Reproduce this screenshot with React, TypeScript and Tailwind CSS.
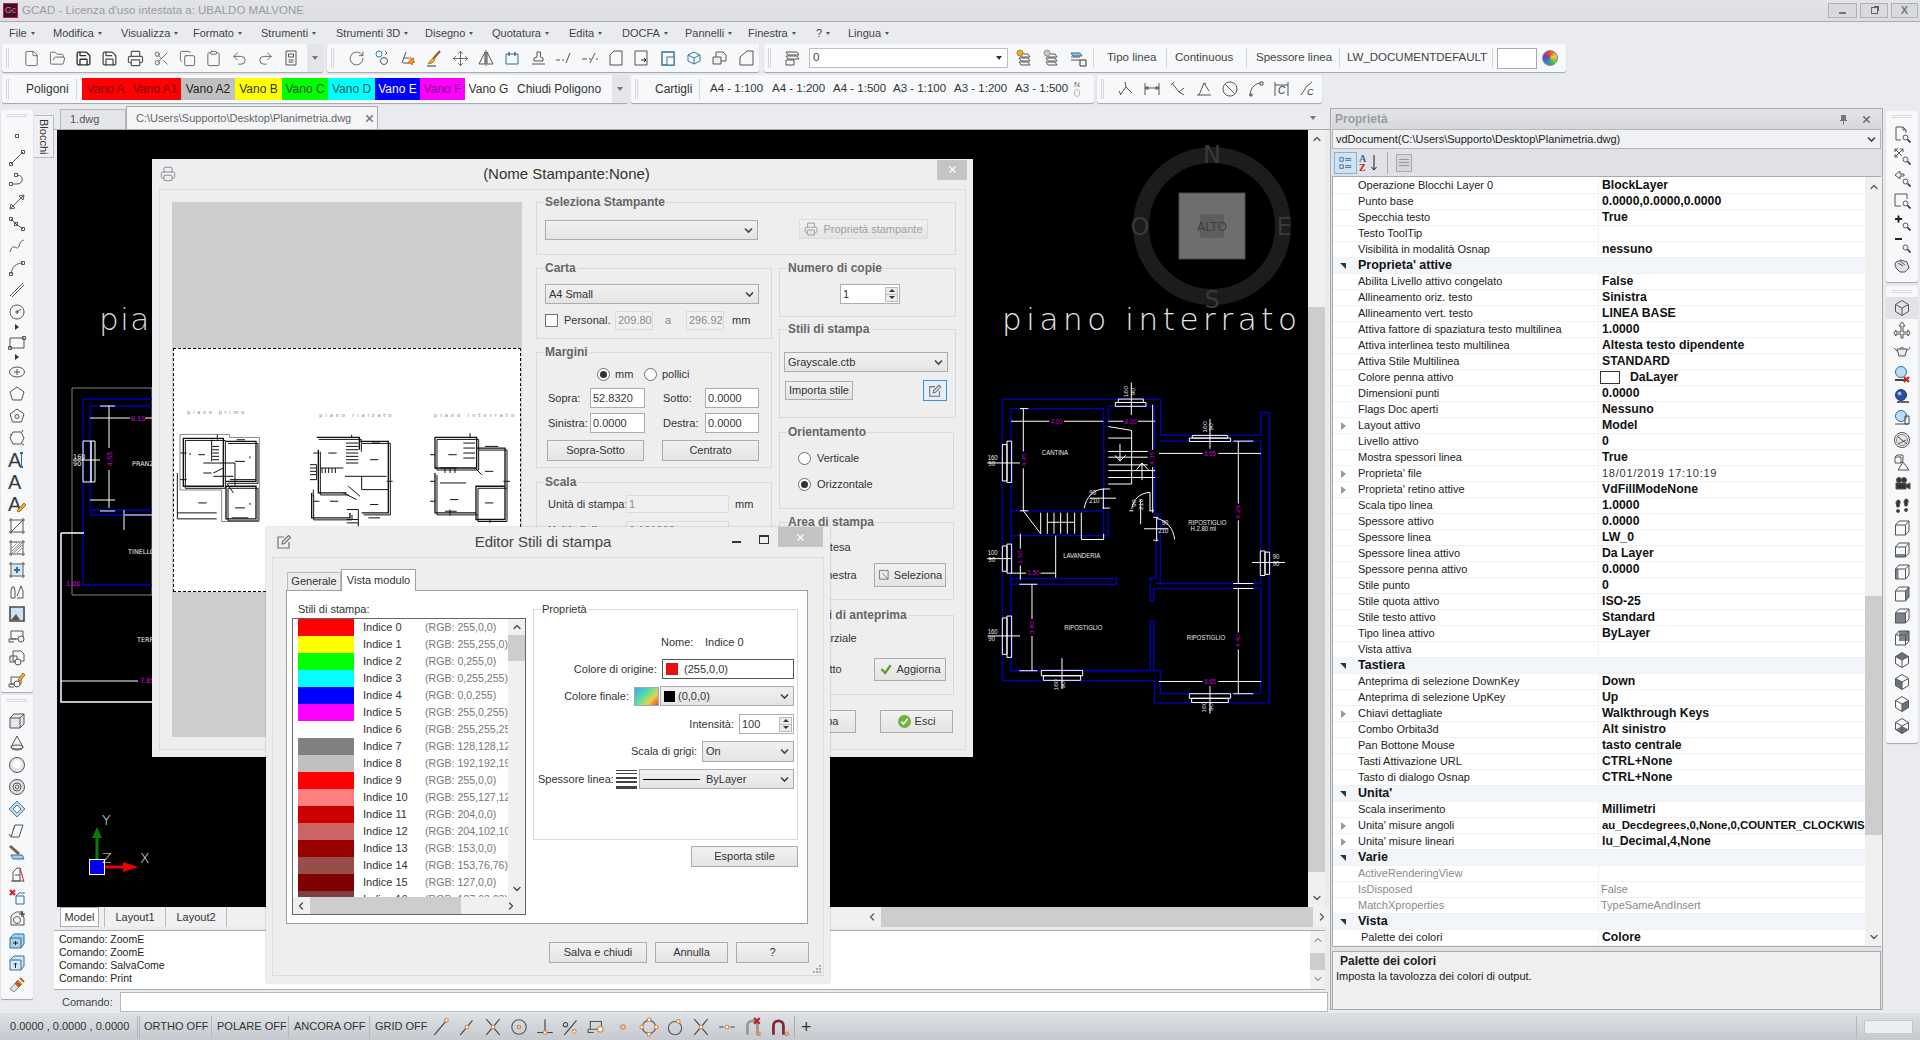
import type { ReactNode } from "react";
import { ChevronDown, ChevronLeft, ChevronRight, ChevronUp, Clipboard, Copy, File, FolderOpen, Move, Printer, Redo2, RotateCw, Save, Scissors, Undo2, X } from "lucide-react";

const sq = (x: number, y: number) => `M${x - 1.5} ${y - 1.5}h3v3h-3z`;
const r = (x: number, y: number, w: number, h: number) => `M${x} ${y}h${w}v${h}h${-w}z`;

function Svg({ children, s = 18 }: { children: ReactNode; s?: number }) {
  return (
    <svg width={s} height={s} viewBox="0 0 18 18" fill="none" stroke="#555" strokeWidth={1}>
      {children}
    </svg>
  );
}
const P = (d: string) => (
  <Svg>
    <path d={d} />
  </Svg>
);
const mag = (
  <>
    <circle cx="12.5" cy="12.5" r="2.5" />
    <path d="M14.5 14.5l3 3" strokeWidth={1.6} stroke="#333" />
  </>
);
const Zoom = (d: string) => (
  <Svg>
    <path d={d} />
    {mag}
  </Svg>
);
const cube = (face: string) => (
  <Svg>
    {face && <path d={face} fill="#7d838c" stroke="none" />}
    <path d="M2.5 6H12.5V16H2.5ZM2.5 6L6 2H16V12L12.5 16M12.5 6L16 2" />
  </Svg>
);
const iso = (face: string) => (
  <Svg>
    {face && <path d={face} fill="#6d7178" stroke="none" />}
    <path d="M9 1.5L15.5 5.5V12.5L9 16.5L2.5 12.5V5.5ZM9 9L2.5 5.5M9 9L15.5 5.5M9 9V16.5" />
  </Svg>
);
const Ab = ({ c }: { c?: ReactNode }) => (
  <span className="relative flex h-[20px] w-[22px] items-center pl-[2px] font-['Liberation_Sans',sans-serif] text-[20px] leading-none text-[#3a3a3a]">
    A{c}
  </span>
);

const lucide = { size: 17, strokeWidth: 1.2, color: "#555" };

const top1 = [
  <File {...lucide} />,
  <FolderOpen {...lucide} />,
  <Save {...lucide} strokeWidth={1.9} color="#333" />,
  <Save {...lucide} strokeWidth={1.7} color="#444" />,
  <Printer {...lucide} strokeWidth={1.6} />,
  <Scissors {...lucide} />,
  <Copy {...lucide} />,
  <Clipboard {...lucide} />,
  <Undo2 {...lucide} />,
  <Redo2 {...lucide} />,
  P("M4 2H14V16H4ZM6.5 5H11.5V8H6.5ZM6.5 11H11.5M6.5 13H11.5"),
];

const top2 = [
  <RotateCw {...lucide} />,
  <Svg>
    <circle cx="6" cy="5" r="3" stroke="#2f7fb8" />
    <circle cx="11" cy="12" r="3.5" stroke="#555" />
    <path d="M12 2l2 2-2 2" />
  </Svg>,
  <Svg>
    <path d="M3 14L7 3M5 9H10M4 14H9" />
    <path d="M11 8l1.5 2 2.5-1-1 2.5 2 1.5-2.5.5-.5 2.5-1.5-2-2.5.5 1-2.5" fill="#e8963a" stroke="#c9701c" />
  </Svg>,
  <Svg>
    <path d="M15 2L8 10" stroke="#8b5a2b" strokeWidth={2} />
    <path d="M8 9L5 12L3 15L7 14L10 11Z" fill="#f0b030" stroke="#b87a10" />
    <path d="M2 17H11" stroke="#333" />
  </Svg>,
  <Move {...lucide} />,
  P("M8 3L2 15H8ZM10 3L16 15H10ZM9 1V17"),
  <Svg>
    <path d="M3 5H15V15H3Z" stroke="#2d6f9f" />
    <path d="M6 3V7M12 3V7" stroke="#333" />
  </Svg>,
  P("M3 15H16M5 12H14V9L11.5 8V3H8V8L5 9Z"),
  P("M1 11H5M7 11H9M11 14L15 4"),
  P("M1 10H6M8 10H10M9 14L14 4M15 10H17"),
  P("M3 16V6L7 2H15V16Z"),
  <Svg>
    <path d="M2 2H14V16H2Z" />
    <path d="M8 11H13M11 9l2 2-2 2" stroke="#222" />
  </Svg>,
  <Svg>
    <path d="M3 3H15V16H3Z" stroke="#2d6f9f" strokeWidth={1.4} />
    <path d="M8 8H15V16H8Z" fill="#fff" stroke="#2d6f9f" />
  </Svg>,
  <Svg>
    <path d="M3 6L9 3L15 6V12L9 15L3 12ZM9 9V15M3 6L9 9L15 6" stroke="#2d7d9a" />
  </Svg>,
  <Svg>
    <path d="M5 3H12L15 6V12H5Z" />
    <path d="M2 8H10V15H2Z" fill="#eee" />
  </Svg>,
  P("M3 16V8L10 2H16V16Z"),
];

const layerIcons = [
  <Svg>
    <path d="M4 5H13L15 8H6ZM4 9H13L15 12H6ZM4 13H13L15 16H6Z" />
    <circle cx="5" cy="4" r="3" fill="#e5b030" stroke="#b8860b" />
  </Svg>,
  <Svg>
    <path d="M4 5H13L15 8H6ZM4 9H13L15 12H6ZM4 13H13L15 16H6Z" />
    <circle cx="5" cy="4" r="3" fill="#c8c8c8" stroke="#999" />
  </Svg>,
  <Svg>
    <path d="M2 4H11L13 7H4Z" stroke="#2d6f9f" fill="#9cc4e0" />
    <path d="M2 8H11M2 11H11" />
    <path d="M11 11H17V17H11Z" stroke="#333" />
  </Svg>,
];

const dims = [
  P("M3 15L9 7L15 13M9 7L8 2M2 11l2 4"),
  P("M2 3V15M16 3V15M2 8H16M2 8l3-1.5v3zM16 8l-3-1.5v3z"),
  P("M3 3L10 12L15 8M10 12l5 3M5 2l-3 3"),
  P("M2 15H16M4 15L9 3L14 11M9 3l2 1"),
  P("M9 2a7 7 0 1 0 .01 0zM4.5 4.5L13.5 13.5"),
  P("M3 16C3 9 7 4 13 3M3 16h2v-2h-2zM13 2h3v3h-3z"),
  <Svg>
    <path d="M2 2V16M15 2V16M2 5H15" />
    <text x="5" y="14" fontSize="10" fontStyle="italic" fill="#333" stroke="none">C</text>
  </Svg>,
  <Svg>
    <path d="M2 15L8 6L13 2" />
    <text x="8" y="15" fontSize="9" fontStyle="italic" fill="#333" stroke="none">C</text>
  </Svg>,
];

const Tri = () => (
  <div className="flex h-[8px] w-full items-center justify-center">
    <div className="h-0 w-0 border-y-[3px] border-l-[4px] border-y-transparent border-l-[#333]" />
  </div>
);

const left1: ReactNode[] = [
  P(sq(9, 9)),
  P(`M3 15L15 3${sq(3, 15)}${sq(15, 3)}`),
  P(`M4 13H9C16 13 16 4 9 4${sq(3, 13)}${sq(8, 4)}`),
  P("M3 15L15 3M2 16l1-5 4 4zM16 2l-5 1 4 4z"),
  P(`M3 4L8 9L15 14${sq(3, 4)}${sq(8, 9)}${sq(15, 14)}`),
  P("M2 15C5 4 9 15 11 9S14 4 16 3"),
  P(`M3 15C4 8 8 4 15 4${sq(3, 15)}${sq(15, 4)}`),
  P("M2 15L15 2M4 16L16 4"),
  P("M9 2a7 7 0 1 0 .01 0zM9 9L13 6M8 8h2v2h-2z"),
  "tri",
  P(`M2 5H16V15H2Z${sq(2, 15)}${sq(16, 5)}`),
  "tri",
  <Svg>
    <ellipse cx="9" cy="9" rx="7.5" ry="5" />
    <path d="M9 6V12M6 9H12" />
  </Svg>,
  P("M9 2L16 7L13.5 15H4.5L2 7Z"),
  <Svg>
    <path d="M9 2L16 7L13.5 15H4.5L2 7Z" />
    <circle cx="9" cy="9.5" r="2" />
  </Svg>,
  P("M5 3H13L16 9L13 15H5L2 9ZM4 6l-2-1M14 3l1-2M14 15l2 1"),
  <Ab c={<span className="absolute left-[14px] top-[2px] h-[16px] w-[3px] border-x-0 border-y-2 border-[#2d6f9f] bg-[linear-gradient(#2d6f9f,#2d6f9f)] bg-[length:1px_100%] bg-center bg-no-repeat" />} />,
  <Ab />,
  <Ab
    c={
      <svg className="absolute left-[9px] top-[7px]" width="12" height="12" viewBox="0 0 12 12">
        <path d="M2 10L9 2L11 4L4 11Z" fill="#f0b030" stroke="#a86e10" />
      </svg>
    }
  />,
  P("M3 1V17M15 1V17M1 3H17M1 15H17M3 15L15 3"),
  <Svg>
    <path d="M3 1V17M15 1V17M1 3H17M1 15H17" />
    <path d="M4 14L14 4M4 9L9 4M9 14L14 9M4 12L12 4M6 14L14 6" stroke="#999" />
  </Svg>,
  <Svg>
    <path d="M3 1V17M15 1V17M1 3H17M1 15H17" />
    <path d="M4 4H14V14H4Z" fill="#d6e6f3" stroke="none" />
    <path d="M9 6V12M6 9H12" stroke="#2d6f9f" strokeWidth={2} />
  </Svg>,
  P("M3 8V15H7V8L6 4H4ZM9 13L13 3L15 8V15H9"),
  <Svg>
    <path d="M2 2H16V16H2Z" strokeWidth={1.6} stroke="#444" />
    <path d="M3 3H15V15H3Z" fill="#cfe0ef" stroke="none" />
    <path d="M3 15L8 9L12 15Z" fill="#555" stroke="none" />
  </Svg>,
  <Svg>
    <path d="M3 4H15V12H3ZM1 12H8M1 12V15H6" />
    <circle cx="13" cy="12" r="3" fill="#f5f6f8" />
  </Svg>,
  <Svg>
    <path d="M5 2H13L16 5V12H5ZM2 7H9V13H2Z" />
    <circle cx="10" cy="13" r="3" fill="#f5f6f8" />
  </Svg>,
  <Svg>
    <path d="M3 6H13V13H3ZM1 13H7M1 13V16H6" />
    <circle cx="9" cy="13" r="3" fill="#f5f6f8" />
    <path d="M10 9L15 2L17 4L12 10Z" fill="#f0b030" stroke="#a86e10" />
  </Svg>,
];

const left2: ReactNode[] = [
  <Svg>
    <path d="M2 6H12V16H2ZM2 6L6 2H16V12L12 16M12 6L16 2" fill="#e6e8ec" />
  </Svg>,
  <Svg>
    <path d="M9 2L3 13C3 17 15 17 15 13Z" fill="#eef0f3" />
    <ellipse cx="9" cy="13" rx="6" ry="2" />
  </Svg>,
  <Svg>
    <circle cx="9" cy="9" r="7.5" fill="#e4e6ea" />
    <circle cx="9" cy="8" r="4" fill="#fff" stroke="none" />
  </Svg>,
  <Svg>
    <circle cx="9" cy="9" r="7.5" fill="#dfe1e5" />
    <circle cx="9" cy="9" r="4" fill="#fff" />
    <circle cx="9" cy="9" r="2" fill="#dfe1e5" />
  </Svg>,
  <Svg>
    <path d="M9 1L17 9L9 17L1 9Z" fill="#bcd6ee" stroke="#5b7f9c" />
    <path d="M9 5L13 9L9 13L5 9Z" fill="#fff" stroke="#5b7f9c" />
  </Svg>,
  P("M7 3H15L11 15H3ZM3 15L1 12M7 3L5 8"),
  <Svg>
    <path d="M2 2L11 10" stroke="#7d5f4e" strokeWidth={3} />
    <path d="M3 11H14L16 15H5Z" fill="#a9d1ee" stroke="#2d6f9f" />
  </Svg>,
  <Svg>
    <path d="M5 15V6L9 2H12V15Z" />
    <path d="M7 9H12M3 15H15" />
    <path d="M12 2L16 16" stroke="#d02020" />
  </Svg>,
  <Svg>
    <path d="M8 8H16V16H8ZM8 8L11 5H17" stroke="#2d6f9f" />
    <path d="M2 2L7 7M7 2L2 7" stroke="#d02020" strokeWidth={2} />
  </Svg>,
  <Svg>
    <path d="M3 15V6L8 2H14L16 8V15Z" />
    <circle cx="9" cy="10" r="3.5" />
    <path d="M14 1V7M11 4H17" stroke="#222" />
  </Svg>,
  <Svg>
    <path d="M2 6H13V16H2ZM2 6L6 2H16V12L13 16" fill="#a9d1ee" stroke="#2d6f9f" />
    <path d="M5 11H10M7.5 9V13" stroke="#222" />
  </Svg>,
  <Svg>
    <path d="M2 6H13V16H2ZM2 6L6 2H16V12L13 16" fill="#d8e9f6" stroke="#2d6f9f" />
    <path d="M7.5 14V9M6 10.5L7.5 9L9 10.5" stroke="#222" />
  </Svg>,
  <Svg>
    <path d="M2 13L10 4L14 8L6 16Z" fill="#dce4ea" stroke="#888" />
    <path d="M8 6L12 10" stroke="#c9581c" strokeWidth={4} />
    <path d="M12 2L16 6" stroke="#c9581c" strokeWidth={2} />
  </Svg>,
];

const right1 = [
  Zoom("M3 2H10L13 5V8M10 2V5H13M3 2V15H8"),
  Zoom("M2 2L9 9M2 2h3M2 2v3M10 2L2 10M10 2h-3M10 2v3M2 10h3M2 10v-3"),
  Zoom("M7 2L2 6L7 10V7H11V5H7Z"),
  Zoom("M2 3H14V8M2 3V15H8"),
  <Svg>
    <path d="M2 6H9M5.5 2.5V9.5" stroke="#222" strokeWidth={2} />
    {mag}
  </Svg>,
  <Svg>
    <path d="M2 4H9" stroke="#222" strokeWidth={2} />
    {mag}
  </Svg>,
  <Svg>
    <path d="M3 5L8 3L14 5L16 11L12 15H7L3 11L2 7Z" fill="#dfe1e5" />
    <path d="M5 6L10 9M7 4L12 8" />
  </Svg>,
];

const right2 = [
  iso(""),
  P("M9 1L6 5H8V11H3V9L1 12L3 15V13H8V17H10V13H15V15L17 12L15 9V11H10V5H12Z"),
  <Svg>
    <path d="M4 6H14L12 13H6ZM7 6C7 4 11 4 11 6M14 7C17 6 17 5 16 4M4 8L1 5" fill="#e6e8ec" />
  </Svg>,
  <Svg>
    <circle cx="8" cy="7" r="5.5" fill="#bcdcf2" stroke="#2d6f9f" />
    <path d="M2 15H12" stroke="#444" strokeWidth={2} />
    <path d="M11 12L16 17M16 12L11 17" stroke="#d02020" strokeWidth={2} />
  </Svg>,
  <Svg>
    <circle cx="8" cy="8" r="5.5" fill="#2a4f9c" stroke="#1e3a78" />
    <circle cx="6.5" cy="6.5" r="2" fill="#9cb8e8" stroke="none" />
    <path d="M4 15H16" stroke="#666" strokeWidth={2} />
  </Svg>,
  <Svg>
    <circle cx="8" cy="7" r="5.5" fill="#bcdcf2" stroke="#2d6f9f" />
    <path d="M2 15H15M12 7H16V15H12Z" stroke="#444" />
  </Svg>,
  <Svg>
    <circle cx="9" cy="9" r="7.5" />
    <circle cx="9" cy="9" r="5.5" fill="#e4e6ea" stroke="#888" />
    <path d="M4 5L14 13M5 13L13 9" />
  </Svg>,
  <Svg>
    <path d="M2 4H8V10H2ZM2 4L4 2H10V8L8 10M10 9L5 17H16Z" />
  </Svg>,
  <Svg>
    <circle cx="6" cy="5" r="2.5" fill="#333" />
    <circle cx="11" cy="5" r="2.5" fill="#333" />
    <path d="M3 8H13V14H3ZM13 10L17 8V14L13 12" fill="#333" />
  </Svg>,
  <Svg>
    <path d="M3 6C3 2 8 2 7 6L6 10H4ZM11 5C11 1 16 1 15 5L14 9H12Z" fill="#333" />
    <circle cx="5" cy="14" r="1.5" fill="#333" />
    <circle cx="13" cy="13" r="1.5" fill="#333" />
  </Svg>,
  cube(""),
  cube("M2.5 13H12.5V16H2.5Z"),
  cube("M2.5 6H5.5V16H2.5Z"),
  cube("M12.5 6L16 2V12L12.5 16Z"),
  cube("M2.5 6H12.5V16H2.5Z"),
  cube("M6 2H16V12H6Z"),
  iso("M2.5 5.5L9 1.5L15.5 5.5L9 9Z"),
  iso("M2.5 12.5V5.5L9 9V16.5Z"),
  iso("M15.5 12.5V5.5L9 9V16.5Z"),
  iso("M2.5 12.5L9 16.5L15.5 12.5L9 9Z"),
];

const dotc = "#d8843a";
const snap = (d: string, pts: number[][]) => (
  <Svg s={20}>
    <path d={d} stroke="#444" />
    {pts.map((p, i) => (
      <circle key={i} cx={p[0]} cy={p[1]} r="1.6" stroke={dotc} fill="#fff" />
    ))}
  </Svg>
);
const snaps = [
  snap("M3 16L14 3", [[14, 3]]),
  snap("M3 16L14 3", [[9, 9]]),
  snap("M3 2L15 16M15 2L3 16", [[9, 9]]),
  <Svg s={20}>
    <circle cx="9" cy="9" r="6.5" />
    <circle cx="9" cy="9" r="1.6" stroke={dotc} />
  </Svg>,
  snap("M9 2V14M2 14H16", [[9, 14]]),
  snap("M3 16L14 3M4 5a2 2 0 1 0 .01 0", [[12, 13]]),
  <Svg s={20}>
    <path d="M3 4H13V11H3ZM1 11H8M1 11V14H6" />
    <circle cx="12" cy="11" r="2.5" stroke={dotc} fill="#fff" />
  </Svg>,
  <Svg s={20}>
    <circle cx="9" cy="9" r="2" stroke={dotc} />
  </Svg>,
  <Svg s={20}>
    <circle cx="9" cy="9" r="6" />
    <path d="M9 3V15M3 9H15" stroke="#ddd" />
    {[[9, 2.5], [9, 15.5], [2.5, 9], [15.5, 9]].map((p, i) => (
      <circle key={i} cx={p[0]} cy={p[1]} r="1.6" stroke={dotc} fill="#fff" />
    ))}
  </Svg>,
  <Svg s={20}>
    <circle cx="9" cy="10" r="6" />
    <circle cx="12" cy="4" r="1.6" stroke={dotc} fill="#fff" />
  </Svg>,
  snap("M3 2L15 16M15 2L3 16", [[9, 9]]),
  snap("M2 9H6M12 9H16", [[9, 9]]),
  <Svg s={20}>
    <path d="M4 16V8C4 2 13 2 13 8V16" stroke="#999" strokeWidth={2.5} />
    <path d="M10 1L15 6M15 1L10 6" stroke="#c02020" strokeWidth={2} />
    <circle cx="14" cy="15" r="1.5" stroke={dotc} />
  </Svg>,
  <Svg s={20}>
    <path d="M4 16V8C4 2 13 2 13 8V16" stroke="#7a2c36" strokeWidth={2.5} />
    <circle cx="16" cy="15" r="1.5" stroke={dotc} />
  </Svg>,
];

function Grip() {
  return <div className="mx-[4px] h-[20px] w-[3px] shrink-0 border-x border-[#d5d7db]" />;
}
function Sep({ cls = "" }: { cls?: string }) {
  return <div className={`h-[20px] w-px shrink-0 bg-[#d5d7db] ${cls}`} />;
}
const panel = "flex items-center rounded-[2px] bg-[#f7f8fa] shadow-[0_1px_1px_rgba(0,0,0,0.3)]";

function DropEnd() {
  return (
    <div className="ml-auto flex h-full w-[16px] items-center justify-center rounded-r-[2px] bg-[#e3e5e9]">
      <div className="h-0 w-0 border-x-[3px] border-t-[4px] border-x-transparent border-t-[#777]" />
    </div>
  );
}

const menus = [
  ["File", "w-[44px]"],
  ["Modifica", "w-[68px]"],
  ["Visualizza", "w-[72px]"],
  ["Formato", "w-[68px]"],
  ["Strumenti", "w-[75px]"],
  ["Strumenti 3D", "w-[89px]"],
  ["Disegno", "w-[67px]"],
  ["Quotatura", "w-[77px]"],
  ["Edita", "w-[53px]"],
  ["DOCFA", "w-[63px]"],
  ["Pannelli", "w-[63px]"],
  ["Finestra", "w-[68px]"],
  ["?", "w-[32px]"],
  ["Lingua", "w-[60px]"],
];

const vani = [
  ["Vano A", "w-[47px] bg-[#ff0000] text-[#7a1010]"],
  ["Vano A1", "w-[52px] bg-[#ff0000] text-[#7a1010]"],
  ["Vano A2", "w-[54px] bg-[#c0c0c0] text-[#222]"],
  ["Vano B", "w-[47px] bg-[#ffff00] text-[#333]"],
  ["Vano C", "w-[46px] bg-[#00ff00] text-[#225522]"],
  ["Vano D", "w-[47px] bg-[#00ffff] text-[#225555]"],
  ["Vano E", "w-[45px] bg-[#0000ff] text-white"],
  ["Vano F", "w-[45px] bg-[#ff00ff] text-[#7a107a]"],
  ["Vano G", "w-[47px] bg-white text-[#333]"],
];

const cartigli = [
  ["A4 - 1:100", "w-[62px]"],
  ["A4 - 1:200", "w-[61px]"],
  ["A4 - 1:500", "w-[60px]"],
  ["A3 - 1:100", "w-[61px]"],
  ["A3 - 1:200", "w-[61px]"],
  ["A3 - 1:500", "w-[58px]"],
];

type Row = { n: string; v?: string; cat?: boolean; exp?: boolean; thin?: boolean; dis?: boolean; box?: boolean; long?: boolean };
const rows: Row[] = [
  { n: "Operazione Blocchi Layer 0", v: "BlockLayer" },
  { n: "Punto base", v: "0.0000,0.0000,0.0000" },
  { n: "Specchia testo", v: "True" },
  { n: "Testo ToolTip" },
  { n: "Visibilità in modalità Osnap", v: "nessuno" },
  { n: "Proprieta' attive", cat: true },
  { n: "Abilita Livello attivo congelato", v: "False" },
  { n: "Allineamento oriz. testo", v: "Sinistra" },
  { n: "Allineamento vert. testo", v: "LINEA BASE" },
  { n: "Attiva fattore di spaziatura testo multilinea", v: "1.0000" },
  { n: "Attiva interlinea testo multilinea", v: "Altesta testo dipendente" },
  { n: "Attiva Stile Multilinea", v: "STANDARD" },
  { n: "Colore penna attivo", v: "DaLayer", box: true },
  { n: "Dimensioni punti", v: "0.0000" },
  { n: "Flags Doc aperti", v: "Nessuno" },
  { n: "Layout attivo", v: "Model", exp: true },
  { n: "Livello attivo", v: "0" },
  { n: "Mostra spessori linea", v: "True" },
  { n: "Proprieta' file", v: "18/01/2019 17:10:19", exp: true, thin: true },
  { n: "Proprieta' retino attive", v: "VdFillModeNone", exp: true },
  { n: "Scala tipo linea", v: "1.0000" },
  { n: "Spessore attivo", v: "0.0000" },
  { n: "Spessore linea", v: "LW_0" },
  { n: "Spessore linea attivo", v: "Da Layer" },
  { n: "Spessore penna attivo", v: "0.0000" },
  { n: "Stile punto", v: "0" },
  { n: "Stile quota attivo", v: "ISO-25" },
  { n: "Stile testo attivo", v: "Standard" },
  { n: "Tipo linea attivo", v: "ByLayer" },
  { n: "Vista attiva" },
  { n: "Tastiera", cat: true },
  { n: "Anteprima di selezione DownKey", v: "Down" },
  { n: "Anteprima di selezione UpKey", v: "Up" },
  { n: "Chiavi dettagliate", v: "Walkthrough Keys", exp: true },
  { n: "Combo Orbita3d", v: "Alt sinistro" },
  { n: "Pan Bottone Mouse", v: "tasto centrale" },
  { n: "Tasti Attivazione URL", v: "CTRL+None" },
  { n: "Tasto di dialogo Osnap", v: "CTRL+None" },
  { n: "Unita'", cat: true },
  { n: "Scala inserimento", v: "Millimetri" },
  { n: "Unita' misure angoli", v: "au_Decdegrees,0,None,0,COUNTER_CLOCKWISE", exp: true, long: true },
  { n: "Unita' misure lineari", v: "lu_Decimal,4,None", exp: true },
  { n: "Varie", cat: true },
  { n: "ActiveRenderingView", dis: true },
  { n: "IsDisposed", v: "False", dis: true },
  { n: "MatchXproperties", v: "TypeSameAndInsert", dis: true },
  { n: "Vista", cat: true },
  { n: "Palette dei colori", v: "Colore" },
];

const stili = [
  ["#ff0000", "255,0,0"],
  ["#ffff00", "255,255,0"],
  ["#00ff00", "0,255,0"],
  ["#00ffff", "0,255,255"],
  ["#0000ff", "0,0,255"],
  ["#ff00ff", "255,0,255"],
  ["#ffffff", "255,255,255"],
  ["#808080", "128,128,128"],
  ["#c0c0c0", "192,192,192"],
  ["#ff0000", "255,0,0"],
  ["#ff7f7f", "255,127,127"],
  ["#cc0000", "204,0,0"],
  ["#cc6666", "204,102,102"],
  ["#990000", "153,0,0"],
  ["#994c4c", "153,76,76"],
  ["#7f0000", "127,0,0"],
  ["#7f3f3f", "127,63,63"],
];

function V() {
  return (
    <svg className="ml-auto mr-[4px] shrink-0" width="9" height="7" viewBox="0 0 9 7" fill="none" stroke="#444" strokeWidth={1.6}>
      <path d="M1 1.5L4.5 5L8 1.5" />
    </svg>
  );
}
function Sel({ cls, children }: { cls: string; children?: ReactNode }) {
  return (
    <div className={`flex shrink-0 items-center whitespace-nowrap border border-[#acacac] bg-gradient-to-b from-[#f1f1f1] to-[#e4e4e4] pl-[3px] ${cls}`}>
      {children}
      <V />
    </div>
  );
}
function Inp({ cls, children, dis }: { cls: string; children?: ReactNode; dis?: boolean }) {
  return (
    <div className={`flex shrink-0 items-center border pl-[2px] ${dis ? "border-[#dcdcdc] bg-[#f0f0f0] text-[#8a8a8a]" : "border-[#adadad] bg-white"} ${cls}`}>
      {children}
    </div>
  );
}
function Btn({ cls, children }: { cls: string; children?: ReactNode }) {
  return (
    <div className={`flex shrink-0 items-center justify-center whitespace-nowrap border border-[#acacac] bg-gradient-to-b from-[#f1f1f1] to-[#e4e4e4] ${cls}`}>
      {children}
    </div>
  );
}
function Radio({ on }: { on?: boolean }) {
  return (
    <div className="flex h-[13px] w-[13px] shrink-0 items-center justify-center rounded-full border border-[#707070] bg-white">
      {on && <div className="h-[7px] w-[7px] rounded-full bg-[#333]" />}
    </div>
  );
}
function Group({ label, cls, lab, children }: { label: string; cls: string; lab?: string; children?: ReactNode }) {
  return (
    <div className={`shrink-0 border border-[#dadada] ${cls}`}>
      <div className={`-mt-[8px] ml-[7px] h-[15px] w-fit whitespace-nowrap px-[1px] leading-[15px] ${lab ?? "bg-[#eeeeee] text-[12px] font-bold text-[#666]"}`}>{label}</div>
      {children}
    </div>
  );
}
function EditGlyph({ s = 16 }: { s?: number }) {
  return (
    <svg width={s} height={s} viewBox="0 0 16 16" fill="none" stroke="#707070" strokeWidth={1.2}>
      <path d="M13 8V14H2V3H8" />
      <path d="M6 10L6.5 7.5L12.5 1.5L14.5 3.5L8.5 9.5Z" />
    </svg>
  );
}
function Spin() {
  return (
    <div className="ml-auto mr-[1px] flex h-[15px] w-[13px] flex-col border border-[#bbb] bg-[#ececec]">
      <div className="flex flex-1 items-center justify-center border-b border-[#bbb]">
        <div className="h-0 w-0 border-x-[3px] border-b-[3px] border-x-transparent border-b-[#333]" />
      </div>
      <div className="flex flex-1 items-center justify-center">
        <div className="h-0 w-0 border-x-[3px] border-t-[3px] border-x-transparent border-t-[#333]" />
      </div>
    </div>
  );
}

const miniWalls = [
  "M40 296H160V440H40ZM168 305H258V425H168M168 440H258V538H168V440",
  "M440 293H568V330M445 330V460H530M570 305H655V520H575M425 460V535H540V520",
  "M795 293H920V385H795ZM795 400V520H918V440H1005V325H920M918 520V540H1005V440",
];

function Preview() {
  const b = { fill: "none", stroke: "#111", strokeWidth: 3 };
  return (
    <svg className="h-full w-full" viewBox="12 27 1038 728" preserveAspectRatio="none">
      <g fontFamily="'DejaVu Sans', sans-serif" fontSize="15" fill="#777">
        <text x="52" y="224" textLength="170">piano primo</text>
        <text x="448" y="232" textLength="216">piano rialzato</text>
        <text x="792" y="232" textLength="240">piano interrato</text>
      </g>
      <path d="M30 284H178V293H268V546H155V451H30Z" fill="none" stroke="#888" strokeWidth={3} />
      {miniWalls.map((d, i) => (
        <g key={i}>
          <path {...b} d={d} strokeWidth={4} />
          <path {...b} d={d} transform="translate(6 6)" />
        </g>
      ))}
      <path {...b} d="M22 400V538H140M22 520H140M125 300V365M127 320H147M127 330H147M127 340H147M127 350H147M127 360H147M100 370H195V440M100 400H125M130 410H190M180 420H258M142 284V300M32 340H50M30 420H50M185 535H235M200 300H225M60 340V346M85 345H105M195 365H225M85 490H110M195 505H225M130 400L160 385M170 430L190 460M240 350V356M240 490V496" />
      <path {...b} d="M528 310H565M528 320H565M528 330H565M528 340H565M528 350H565M528 360H565M528 370H565M450 385H520M456 385V400M466 385V400M476 385V400M486 385V400M496 385V400M525 410H650M420 375H440V420H420M420 385H440M420 395H440M420 405H440M475 340H500M600 360H625M480 485H505M600 495H625M575 410V450H655M520 460L560 480M535 440L570 470M530 510H565V560M530 540H565M530 550H565M595 535H630M430 450V470M605 310H630M430 340H448M430 485H448M650 425H668M545 285V295" />
      <path {...b} d="M880 310H915M880 325H915M880 340H915M880 355H915M810 385H860M825 385V400M840 385V400M855 385V400M810 430H888M835 345H860M945 395H970M840 480H865M945 490H970M900 280V295M945 320H985M1000 425H1020M780 345H795M780 425H795M780 485H795M825 515H860M840 510V528M960 540V550M915 385L935 405" />
    </svg>
  );
}

function Plan() {
  const blue = "M127 704H602V798H902V738H928V1497H584V1439H127ZM153 728H431V995H153ZM445 722H584V1005H601M445 722V770M601 813H902V1185H601V1005M431 995V1060H153M445 995V1060H431M153 995V1187H470V1172H153M153 1187V1413H571V1282H581V1413H601V1473H902V1198H581V1230H571V1172H588V1075M601 1185H588";
  const white =
    r(127, 822, 14, 95) + r(141, 813, 14, 108) + "M82 870H180" +
    r(127, 1087, 14, 66) + r(141, 1082, 14, 76) + "M82 1120H155" +
    r(127, 1275, 14, 95) + r(141, 1270, 14, 108) + "M82 1322H180" +
    r(466, 712, 92, 10) + r(475, 703, 75, 9) + "M514 660V745" +
    r(688, 805, 124, 9) + r(697, 798, 106, 7) + "M750 755V835" +
    r(244, 1412, 124, 14) + r(250, 1426, 112, 12) + "M306 1380V1460" +
    r(688, 1473, 124, 12) + r(695, 1485, 110, 11) + "M750 1440V1525" +
    r(901, 1100, 14, 64) + r(915, 1103, 14, 58) + "M876 1130H975" +
    "M153 761H272M310 761H430M445 761H495M530 761H585M190 728V845M190 880V995M578 718V845M578 880V1000M597 845H730M775 845H903M835 813V985M835 1015V1185M181 1055V1100M181 1130V1175M153 1158H200M240 1158H287M287 1060V1170M216 1187V1285M216 1315V1413M835 1198V1320M835 1350V1473M597 1441H730M775 1441H903" +
    "M180 728H205M180 995H205M178 1187H232M178 1413H232M820 813H880M820 1185H880M820 1198H880M820 1473H880" +
    "M445 775L515 785V925H445M445 805H515M445 840H585M445 855H585M445 875H585M445 890H585M445 908H585M480 820V865L465 850M480 865L497 850M546 915V870L530 888M546 870L565 888" +
    "M190 995L242 1055M242 1000V1055M262 1000V1055M282 1000V1055M302 1000V1055M322 1000V1055M344 1000V1055M364 1000V1070H431V1055M262 1025H344" +
    "M373 988C378 960 400 940 430 938M430 938V990M428 938H450M428 988H450M390 962H468M515 990C520 965 540 948 570 947M570 947V995M542 965V1030M508 995H520M568 995H582M590 1015C620 1020 640 1040 644 1070M590 1015V1075M552 1042H625M580 1012H595M580 1072H595";
  const mg = [
    ["4.00", 290, 761, 0],
    ["8.00", 512, 761, 0],
    ["4.45", 192, 862, 1],
    ["4.35", 575, 858, 1],
    ["6.65", 750, 845, 0],
    ["6.29", 835, 998, 1],
    ["1.50", 181, 1116, 1],
    ["1.50", 220, 1158, 0],
    ["3.80", 216, 1300, 1],
    ["4.40", 835, 1335, 1],
    ["6.65", 750, 1441, 0],
  ] as const;
  const wt = [
    ["CANTINA", 285, 850],
    ["LAVANDERIA", 365, 1118],
    ["RIPOSTIGLIO", 370, 1306],
    ["RIPOSTIGLIO", 738, 1332],
    ["RIPOSTIGLIO", 742, 1032],
    ["H.2.80 ml", 730, 1048],
    ["160", 98, 862],
    ["90", 95, 878],
    ["100", 98, 1110],
    ["90", 95, 1128],
    ["160", 98, 1316],
    ["90", 95, 1334],
    ["90", 948, 1122],
    ["90", 948, 1140],
    ["90", 398, 955],
    ["210", 403, 974],
    ["90", 615, 1032],
    ["210", 610, 1052],
  ] as const;
  const wv = [
    ["160", 503, 684],
    ["90", 524, 684],
    ["160", 740, 776],
    ["90", 760, 776],
    ["160", 294, 1450],
    ["90", 314, 1450],
    ["160", 738, 1508],
    ["90", 760, 1508],
    ["90", 528, 975],
    ["210", 548, 978],
  ] as const;
  return (
    <g transform="translate(960 130) scale(0.3333 0.3827)">
      <path d={blue} fill="none" stroke="#0000c0" vectorEffect="non-scaling-stroke" strokeWidth={1.3} />
      <path d={white} fill="none" stroke="#fff" vectorEffect="non-scaling-stroke" strokeWidth={1} />
      {mg.map(([t, x, y, v], i) => (
        <g key={i} transform={`translate(${x} ${y})${v ? " rotate(-90)" : ""}`}>
          <rect x={-22} y={-12} width="44" height="24" fill="#000" />
          <text y={6} textAnchor="middle" fontSize="18" fill="#d000d0">{t}</text>
        </g>
      ))}
      {wt.map(([t, x, y], i) => (
        <text key={i} x={x} y={y} textAnchor="middle" fontSize="18" fill="#e8e8e8">{t}</text>
      ))}
      {wv.map(([t, x, y], i) => (
        <text key={i} transform={`translate(${x} ${y}) rotate(-90)`} textAnchor="middle" fontSize="18" fill="#e8e8e8">{t}</text>
      ))}
    </g>
  );
}

function Drawing() {
  return (
    <svg className="h-full w-full" viewBox="57 130 1251 777">
      <g fontFamily="'DejaVu Sans', sans-serif">
        <circle cx="1212" cy="226" r="71" fill="none" stroke="#1c1c1c" strokeWidth={16} />
        <g fontSize="24" fill="#3a3a3a" textAnchor="middle">
          <text x="1212" y="163">N</text>
          <text x="1212" y="308">S</text>
          <text x="1140" y="235">O</text>
          <text x="1284" y="235">E</text>
        </g>
        <rect x="1179" y="193" width="66" height="66" fill="#6e6e6e" stroke="#4a4a4a" />
        <rect x="1200" y="214" width="24" height="24" rx="3" fill="#5e5e5e" />
        <text x="1212" y="231" textAnchor="middle" fontSize="12" fill="#3f3f3f">ALTO</text>
        <text x="1002" y="330" fontSize="31" fontWeight="200" fill="#e6e6e6" textLength="295">piano interrato</text>
        <text x="99" y="330" fontSize="31" fontWeight="200" fill="#dcdcdc" textLength="92">piano</text>
      </g>
      <Plan />
      <g fill="none" fontFamily="'DejaVu Sans', sans-serif">
        <path d="M72 388H152V595H72Z" stroke="#808080" />
        <path d="M83 399H152M90 406H152M83 399V585H152M90 406V515H152M90 510H152" stroke="#0000c0" strokeWidth={1.3} />
        <path d="M90 418H130M145 418H152M109 406V448M109 470V508M100 406H115M100 511H115M83 441h8v41h-8zM91 441h4v41h-4zM73 460H100M90 500H115M125 515H152M124 510V530M61 681H138" stroke="#fff" />
        <path d="M61 533H84M61 533V702H152" stroke="#fff" strokeWidth={1.5} />
        <g stroke="none" fontSize="6.5">
          <text x="73" y="459" fill="#eee">160</text>
          <text x="73" y="466" fill="#eee">90</text>
          <text x="132" y="466" fill="#eee">PRANZO</text>
          <text x="128" y="554" fill="#eee">TINELLO</text>
          <text x="137" y="642" fill="#eee">TERRA</text>
          <text x="131" y="421" fill="#e000e0">6.15</text>
          <text transform="translate(112 466) rotate(-90)" fill="#e000e0">4.55</text>
          <text x="140" y="683" fill="#e000e0">7.85</text>
          <text x="66" y="586" fill="#e000e0">1.00</text>
        </g>
      </g>
      <g>
        <path d="M97 860V836" stroke="#0a7a0a" strokeWidth={3} />
        <path d="M92 838L97 827L102 838Z" fill="#0a7a0a" />
        <path d="M105 867H124" stroke="#f00000" strokeWidth={3} />
        <path d="M123 862L138 867L123 872Z" fill="#f00000" />
        <rect x="89.5" y="859.5" width="15" height="15" fill="#0000f0" stroke="#fff" />
        <g fontFamily="'DejaVu Sans', sans-serif" fontSize="14" fontWeight="200" fill="#eee">
          <text x="102" y="825">Y</text>
          <text x="102" y="863">Z</text>
          <text x="140" y="863">X</text>
        </g>
      </g>
    </svg>
  );
}

function Dialog() {
  return (
    <div className="absolute left-[98px] top-[52px] z-10 flex h-[598px] w-[821px] flex-col bg-[#eeeeee]">
      <div className="flex h-[30px] shrink-0 items-center">
        <div className="ml-[8px] w-[20px] opacity-60">
          <Printer size={16} strokeWidth={1.5} color="#456" />
        </div>
        <div className="flex-1 pl-[16px] text-center text-[15px] text-[#333]">(Nome Stampante:None)</div>
        <div className="mb-[9px] mr-[6px] flex h-[20px] w-[30px] items-center justify-center bg-[#c4c4c4]">
          <X size={11} color="#fff" strokeWidth={2.5} />
        </div>
      </div>
      <div className="mx-[7px] flex h-[561px] border border-[#dcdcdc]">
        <div className="ml-[12px] mt-[12px] h-[535px] w-[350px] shrink-0 bg-[#cecece] px-[1px] pt-[146px]">
          <div className="h-[244px] border border-dashed border-black bg-white">
            <Preview />
          </div>
        </div>
        <div className="ml-[14px] mt-[12px] w-[420px] shrink-0 text-[#333]">
          <Group label="Seleziona Stampante" cls="h-[53px] w-[420px]">
            <div className="ml-[8px] mt-[10px] flex items-start">
              <Sel cls="h-[20px] w-[213px]" />
              <Btn cls="-mt-[1px] ml-[41px] h-[20px] w-[129px] gap-[5px] border-[#dcdcdc] text-[#a0a0a0]">
                <Printer size={14} color="#aaa" />
                Proprietà stampante
              </Btn>
            </div>
          </Group>
          <div className="mt-[13px] flex gap-[7px]">
            <div className="w-[236px]">
              <Group label="Carta" cls="h-[71px] w-[236px]">
                <div className="ml-[8px] mt-[8px]">
                  <Sel cls="h-[20px] w-[214px]">A4 Small</Sel>
                  <div className="mt-[7px] flex h-[19px] items-center">
                    <div className="h-[13px] w-[13px] border border-[#707070] bg-white" />
                    <span className="ml-[6px] w-[51px]">Personal.</span>
                    <Inp dis cls="h-[19px] w-[38px]">209.80</Inp>
                    <span className="ml-[12px] w-[21px] text-[#888]">a</span>
                    <Inp dis cls="h-[19px] w-[38px]">296.92</Inp>
                    <span className="ml-[8px]">mm</span>
                  </div>
                </div>
              </Group>
              <Group label="Margini" cls="mt-[13px] h-[116px] w-[236px]">
                <div className="ml-[60px] mt-[7px] flex h-[14px] items-center">
                  <Radio on />
                  <span className="ml-[5px] w-[29px]">mm</span>
                  <Radio />
                  <span className="ml-[5px]">pollici</span>
                </div>
                <div className="ml-[11px] mt-[7px] flex h-[20px] items-center">
                  <span className="w-[42px]">Sopra:</span>
                  <Inp cls="h-[20px] w-[55px]">52.8320</Inp>
                  <span className="ml-[18px] w-[42px]">Sotto:</span>
                  <Inp cls="h-[20px] w-[54px]">0.0000</Inp>
                </div>
                <div className="ml-[11px] mt-[5px] flex h-[20px] items-center">
                  <span className="w-[42px]">Sinistra:</span>
                  <Inp cls="h-[20px] w-[55px]">0.0000</Inp>
                  <span className="ml-[18px] w-[42px]">Destra:</span>
                  <Inp cls="h-[20px] w-[54px]">0.0000</Inp>
                </div>
                <div className="ml-[10px] mt-[7px] flex">
                  <Btn cls="h-[21px] w-[97px]">Sopra-Sotto</Btn>
                  <Btn cls="ml-[18px] h-[21px] w-[97px]">Centrato</Btn>
                </div>
              </Group>
              <Group label="Scala" cls="mt-[14px] h-[250px] w-[236px]">
                <div className="ml-[11px] mt-[5px] flex h-[18px] items-center">
                  <span className="w-[78px] shrink-0 whitespace-nowrap">Unità di stampa:</span>
                  <Inp dis cls="h-[18px] w-[103px]">1</Inp>
                  <span className="ml-[6px]">mm</span>
                </div>
                <div className="ml-[11px] mt-[8px] flex h-[18px] items-center">
                  <span className="w-[78px] shrink-0 whitespace-nowrap">Unità di disegno:</span>
                  <Inp dis cls="h-[18px] w-[103px]">0.101000</Inp>
                </div>
              </Group>
            </div>
            <div className="w-[177px]">
              <Group label="Numero di copie" cls="h-[49px] w-[177px]">
                <Inp cls="ml-[60px] mt-[8px] h-[20px] w-[60px]">
                  1
                  <Spin />
                </Inp>
              </Group>
              <Group label="Stili di stampa" cls="mt-[12px] h-[89px] w-[177px]">
                <Sel cls="ml-[4px] mt-[15px] h-[20px] w-[164px]">Grayscale.ctb</Sel>
                <div className="ml-[5px] mt-[8px] flex items-center">
                  <Btn cls="h-[19px] w-[68px]">Importa stile</Btn>
                  <div className="ml-[70px] flex h-[21px] w-[24px] items-center justify-center border border-[#3c8fd0] bg-[#e3eef8]">
                    <EditGlyph s={14} />
                  </div>
                </div>
              </Group>
              <Group label="Orientamento" cls="mt-[14px] h-[77px] w-[175px]">
                <div className="ml-[18px] mt-[11px] flex h-[14px] items-center">
                  <Radio />
                  <span className="ml-[6px]">Verticale</span>
                </div>
                <div className="ml-[18px] mt-[12px] flex h-[14px] items-center">
                  <Radio on />
                  <span className="ml-[6px]">Orizzontale</span>
                </div>
              </Group>
              <Group label="Area di stampa" cls="mt-[13px] h-[78px] w-[175px]">
                <div className="ml-[18px] mt-[10px] flex h-[14px] items-center">
                  <Radio />
                  <span className="ml-[6px]">Estesa</span>
                </div>
                <div className="ml-[18px] mt-[9px] flex h-[24px] items-center">
                  <Radio on />
                  <span className="ml-[6px] w-[57px]">Finestra</span>
                  <Btn cls="h-[24px] w-[72px] gap-[3px]">
                    <Svg s={13}>
                      <path d="M2 2H14V14H2ZM6 6L14 14" stroke="#555" />
                    </Svg>
                    Seleziona
                  </Btn>
                </div>
              </Group>
              <Group label="Opzioni di anteprima" cls="mt-[15px] h-[80px] w-[175px]">
                <div className="ml-[18px] mt-[8px] flex h-[14px] items-center">
                  <Radio />
                  <span className="ml-[6px]">Parziale</span>
                </div>
                <div className="ml-[18px] mt-[12px] flex h-[24px] items-center">
                  <Radio on />
                  <span className="ml-[6px] w-[57px]">Tutto</span>
                  <Btn cls="h-[23px] w-[72px] gap-[3px]">
                    <Svg s={14}>
                      <path d="M3 9L8 14L15 4" stroke="#5aa02c" strokeWidth={3} />
                    </Svg>
                    Aggiorna
                  </Btn>
                </div>
              </Group>
              <div className="mt-[15px] flex pl-[4px]">
                <Btn cls="h-[23px] w-[73px]">Stampa</Btn>
                <Btn cls="ml-[24px] h-[23px] w-[73px] gap-[4px]">
                  <span className="flex h-[13px] w-[13px] items-center justify-center rounded-full bg-[#6cb33f]">
                    <svg width="9" height="9" viewBox="0 0 9 9" fill="none" stroke="#fff" strokeWidth={1.6}>
                      <path d="M1.5 4.5L3.5 7L7.5 2" />
                    </svg>
                  </span>
                  Esci
                </Btn>
              </div>
            </div>
          </div>
        </div>
      </div>
    </div>
  );
}

function Editor() {
  return (
    <div className="absolute left-[212px] top-[420px] z-20 flex h-[456px] w-[564px] flex-col bg-[#eeeeee] text-[#333] shadow-[0_0_2px_rgba(0,0,0,0.25)]">
      <div className="flex h-[30px] shrink-0 items-center">
        <div className="ml-[10px] w-[20px]">
          <EditGlyph />
        </div>
        <div className="flex-1 pl-[58px] text-center text-[15px] text-[#444]">Editor Stili di stampa</div>
        <div className="h-[2px] w-[9px] bg-[#333]" />
        <div className="mb-[6px] ml-[18px] h-[9px] w-[10px] border border-t-2 border-[#333]" />
        <div className="mb-[10px] ml-[9px] mr-[7px] flex h-[20px] w-[45px] items-center justify-center bg-[#c4c4c4]">
          <X size={11} color="#fff" strokeWidth={2.5} />
        </div>
      </div>
      <div className="relative mx-[6px] h-[419px] border border-[#dcdcdc] pl-[13px] pt-[11px]">
        <div className="flex h-[21px] items-end pl-[1px]">
          <div className="flex h-[18px] w-[54px] items-center justify-center border border-b-0 border-[#bbb] bg-[#ececec]">Generale</div>
          <div className="z-10 -mb-px flex h-[22px] w-[75px] items-center justify-center border border-b-0 border-[#a0a0a0] bg-white">Vista modulo</div>
        </div>
        <div className="flex h-[334px] w-[522px] border border-[#a0a0a0] bg-white">
          <div className="ml-[5px] w-[234px] shrink-0">
            <div className="ml-[6px] mt-[11px] h-[16px] leading-[14px]">Stili di stampa:</div>
            <div className="flex h-[297px] w-[234px] flex-col border border-[#666]">
              <div className="flex h-[278px] overflow-hidden">
                <div className="h-[278px] w-[215px] overflow-hidden">
                  {stili.map(([c, t], i) => (
                    <div key={i} className="flex h-[17px] items-center">
                      <div className="ml-[5px] h-[17px] w-[56px] shrink-0" style={{ backgroundColor: c }} />
                      <span className="ml-[9px] w-[62px] shrink-0">Indice {i}</span>
                      <span className="shrink-0 whitespace-nowrap text-[10.6px] text-[#777]">(RGB: {t})</span>
                    </div>
                  ))}
                </div>
                <div className="flex w-[17px] shrink-0 flex-col items-center bg-[#f0f0f0]">
                  <ChevronUp size={12} strokeWidth={2.5} color="#444" className="my-[2px]" />
                  <div className="h-[26px] w-full bg-[#cdcdcd]" />
                  <ChevronDown size={12} strokeWidth={2.5} color="#444" className="mb-[2px] mt-auto" />
                </div>
              </div>
              <div className="flex h-[17px] items-center bg-[#f0f0f0]">
                <ChevronLeft size={12} strokeWidth={2.5} color="#444" className="ml-[2px]" />
                <div className="ml-[3px] h-full w-[151px] bg-[#cdcdcd]" />
                <ChevronRight size={12} strokeWidth={2.5} color="#444" className="ml-[44px]" />
              </div>
            </div>
          </div>
          <div className="ml-[7px] mt-[18px] w-[265px] shrink-0">
            <Group label="Proprietà" cls="h-[231px] w-[265px]" lab="bg-white">
              <div className="pr-[3px]">
                <div className="mt-[16px] flex h-[18px] items-center justify-end">
                  <span className="w-[44px]">Nome:</span>
                  <span className="w-[89px]">Indice 0</span>
                </div>
                <div className="mt-[8px] flex h-[20px] items-center justify-end gap-[5px]">
                  <span>Colore di origine:</span>
                  <div className="flex h-[20px] w-[132px] items-center border border-[#555] pl-[3px]">
                    <div className="h-[12px] w-[12px] bg-[#e81010]" />
                    <span className="ml-[6px]">(255,0,0)</span>
                  </div>
                </div>
                <div className="mt-[7px] flex h-[20px] items-center justify-end">
                  <span>Colore finale:</span>
                  <div className="ml-[5px] h-[19px] w-[25px] border border-[#9ab] bg-[linear-gradient(135deg,#3ea7e8,#5fe0a0_45%,#f0d040_70%,#e84a30)]" />
                  <Sel cls="ml-[1px] h-[20px] w-[134px]">
                    <div className="h-[11px] w-[11px] bg-black" />
                    <span className="ml-[3px]">(0,0,0)</span>
                  </Sel>
                </div>
                <div className="mt-[8px] flex h-[20px] items-center justify-end gap-[5px]">
                  <span>Intensità:</span>
                  <Inp cls="h-[20px] w-[55px]">
                    100
                    <Spin />
                  </Inp>
                </div>
                <div className="mt-[7px] flex h-[21px] items-center justify-end gap-[5px]">
                  <span>Scala di grigi:</span>
                  <Sel cls="h-[21px] w-[92px]">On</Sel>
                </div>
                <div className="mt-[7px] flex h-[20px] items-center">
                  <span className="ml-[4px] w-[78px] whitespace-nowrap">Spessore linea:</span>
                  <div className="flex h-[19px] w-[21px] flex-col justify-between">
                    <div className="h-px bg-[#444]" />
                    <div className="h-px bg-[#444]" />
                    <div className="h-[2px] bg-[#444]" />
                    <div className="h-[2px] bg-[#444]" />
                    <div className="h-[3px] bg-[#444]" />
                  </div>
                  <Sel cls="ml-[2px] h-[20px] w-[155px] pl-0">
                    <div className="h-px w-[57px] bg-black" />
                    <span className="ml-[6px]">ByLayer</span>
                  </Sel>
                </div>
              </div>
            </Group>
            <div className="mt-[6px] flex justify-end">
              <Btn cls="h-[21px] w-[107px]">Esporta stile</Btn>
            </div>
          </div>
        </div>
        <div className="mt-[18px] flex justify-end gap-[8px] pr-[14px]">
          <Btn cls="h-[21px] w-[98px] border-[#3c8fd0]">Salva e chiudi</Btn>
          <Btn cls="h-[21px] w-[73px]">Annulla</Btn>
          <Btn cls="h-[21px] w-[73px]">?</Btn>
        </div>
        <svg className="absolute bottom-[2px] right-[2px]" width="8" height="8" viewBox="0 0 8 8" fill="#aaa">
          <path d="M6 0h2v2H6zM3 3h2v2H3zM6 3h2v2H6zM0 6h2v2H0zM3 6h2v2H3zM6 6h2v2H6z" />
        </svg>
      </div>
    </div>
  );
}

function Properties() {
  return (
    <div className="mt-[1px] flex h-[902px] w-[553px] shrink-0 flex-col border border-[#a8aaae] bg-[#dfe1e5] px-[1px]">
      <div className="flex h-[20px] shrink-0 items-center bg-gradient-to-b from-[#e2e4e8] to-[#d6d8dc] pl-[3px] pr-[9px] text-[12px] font-bold text-[#9a9ca0]">
        Proprietà
        <svg className="ml-auto" width="9" height="11" viewBox="0 0 9 11" fill="#777">
          <path d="M2 1h5v5h1v1H5v3.5H4V7H1V6h1z" />
        </svg>
        <X size={11} strokeWidth={3} color="#666" className="ml-[13px]" />
      </div>
      <div className="flex h-[20px] shrink-0 items-center border border-[#b5b7bb] bg-[#f0f1f3] pl-[3px] text-[11px] text-[#222]">
        vdDocument(C:\Users\Supporto\Desktop\Planimetria.dwg)
        <V />
      </div>
      <div className="flex h-[27px] shrink-0 items-center gap-[2px] pl-[2px]">
        <div className="flex h-[22px] w-[23px] items-center justify-center border border-[#7fb2da] bg-[#cfe3f3]">
          <Svg s={16}>
            <path d="M2 3h4v4H2zM2 11h4v4H2zM8 4H15M8 6H15M8 12H15M8 14H15" stroke="#3b6c94" />
          </Svg>
        </div>
        <div className="relative flex h-[22px] w-[18px] flex-col justify-center font-['Liberation_Serif',serif] text-[10px] font-bold leading-[9px]">
          <span className="text-[#2d6f9f]">A</span>
          <span className="text-[#c02020]">Z</span>
          <svg className="absolute right-0 top-[3px]" width="6" height="16" viewBox="0 0 6 16" fill="none" stroke="#222">
            <path d="M3 0V15M0.5 12L3 15L5.5 12" />
          </svg>
        </div>
        <div className="ml-[8px] mr-[6px] h-[22px] w-px bg-[#a8aaae]" />
        <div className="flex h-[18px] w-[16px] flex-col justify-center gap-[2px] border border-[#aaa] bg-[#d5d6d9] px-[2px]">
          <div className="h-px bg-[#999]" />
          <div className="h-px bg-[#999]" />
          <div className="h-px bg-[#999]" />
        </div>
      </div>
      <div className="flex h-[771px] shrink-0 border border-[#a8aaae] bg-white">
        <div className="w-[532px] shrink-0 overflow-hidden pt-[1px]">
          {rows.map((w, i) => (
            <div key={i} className={`flex h-[16px] items-center border-b border-[#f1f1f1] ${w.cat ? "bg-[#f2f5f9]" : "bg-white"}`}>
              <div className="flex w-[24px] shrink-0 items-center justify-center pr-[4px]">
                {w.cat && <div className="h-0 w-0 border-l-[6px] border-t-[6px] border-l-transparent border-t-[#333]" />}
                {w.exp && <div className="h-0 w-0 border-y-[4px] border-l-[5px] border-y-transparent border-l-[#999]" />}
              </div>
              <div className={`w-[242px] shrink-0 self-stretch pl-[1px] leading-[15px] ${w.cat ? "text-[12.5px] font-bold text-[#111]" : w.dis ? "text-[#8a8a8a]" : "text-[#222]"} ${i === 47 ? "pl-[4px]" : ""} ${w.cat ? "" : "border-r border-[#f1f1f1]"}`}>
                {w.n}
              </div>
              <div className={`flex min-w-0 flex-1 items-center overflow-hidden whitespace-nowrap leading-[15px] ${w.dis ? "pl-[2px] text-[#8a8a8a]" : w.thin ? "pl-[3px] tracking-[0.75px] text-[#333]" : w.long ? "pl-[3px] text-[11.4px] font-bold text-[#111]" : "pl-[3px] text-[12.25px] font-bold text-[#111]"}`}>
                {w.box && <div className="mr-[8px] h-[13px] w-[20px] shrink-0 -translate-x-[2px] border border-[#333] bg-white" />}
                {w.v}
              </div>
            </div>
          ))}
        </div>
        <div className="flex w-[17px] shrink-0 flex-col items-center bg-[#f0f0f0] pt-[4px]">
          <ChevronUp size={12} strokeWidth={2.5} color="#555" />
          <div className="mt-[403px] h-[239px] w-full bg-[#cdcdcd]" />
          <ChevronDown size={12} strokeWidth={2.5} color="#555" className="mb-[3px] mt-auto" />
        </div>
      </div>
      <div className="mt-[4px] h-[59px] shrink-0 border border-[#a8aaae] bg-[#f0f0f0] pl-[7px] pt-[2px] text-[#222]">
        <div className="text-[12px] font-bold leading-[15px]">Palette dei colori</div>
        <div className="-ml-[4px] leading-[15px]">Imposta la tavolozza dei colori di output.</div>
      </div>
    </div>
  );
}

function LeftBar() {
  return (
    <div className="flex w-[34px] shrink-0 flex-col pl-[1px] pt-[3px]">
      <div className="flex h-[582px] w-[32px] flex-col items-center rounded-[2px] bg-[#f7f8fa] shadow-[0_1px_1px_rgba(0,0,0,0.3)]">
        <div className="mb-[8px] mt-[4px] h-[3px] w-[20px] shrink-0 border-y border-[#d5d7db]" />
        {left1.map((n, i) =>
          n === "tri" ? (
            <Tri key={i} />
          ) : (
            <div key={i} className="flex h-[22px] w-full shrink-0 items-center justify-center">
              {n}
            </div>
          ),
        )}
      </div>
      <div className="mt-[3px] flex h-[304px] w-[32px] flex-col items-center rounded-[2px] bg-[#f7f8fa] shadow-[0_1px_1px_rgba(0,0,0,0.3)]">
        <div className="mb-[8px] mt-[4px] h-[3px] w-[20px] shrink-0 border-y border-[#d5d7db]" />
        {left2.map((n, i) => (
          <div key={i} className="flex h-[22px] w-full shrink-0 items-center justify-center">
            {n}
          </div>
        ))}
      </div>
    </div>
  );
}

function RightBar() {
  return (
    <div className="ml-[3px] flex w-[32px] shrink-0 flex-col pt-[4px]">
      <div className="flex h-[171px] flex-col items-center rounded-[2px] bg-[#f7f8fa] shadow-[0_1px_1px_rgba(0,0,0,0.3)]">
        <div className="mb-[5px] mt-[4px] h-[3px] w-[20px] shrink-0 border-y border-[#d5d7db]" />
        {right1.map((n, i) => (
          <div key={i} className="flex h-[22px] w-full shrink-0 items-center justify-center">
            {n}
          </div>
        ))}
      </div>
      <div className="mt-[4px] flex h-[457px] flex-col items-center rounded-[2px] bg-[#f7f8fa] shadow-[0_1px_1px_rgba(0,0,0,0.3)]">
        <div className="mb-[4px] mt-[4px] h-[3px] w-[20px] shrink-0 border-y border-[#d5d7db]" />
        {right2.map((n, i) => (
          <div key={i} className={`flex h-[22px] w-full shrink-0 items-center justify-center ${i === 0 ? "bg-[#e1e3e7]" : ""}`}>
            {n}
          </div>
        ))}
      </div>
    </div>
  );
}

export default function App() {
  return (
    <div className="flex h-[1040px] w-[1920px] flex-col overflow-hidden bg-[#e9ebef] font-['Liberation_Sans',sans-serif] text-[11px] text-[#333]">
      <div className="flex h-[22px] shrink-0 items-center border-b border-[#a9abb0] bg-gradient-to-b from-[#e3e4e8] to-[#dcdee2]">
        <div className="ml-[3px] flex h-[15px] w-[15px] items-center justify-center border border-[#c2185b] bg-[#3b1020] text-[9px] text-[#e07090]">Gc</div>
        <span className="ml-[4px] text-[11.5px] text-[#9a9ca0]">GCAD - Licenza d'uso intestata a: UBALDO MALVONE</span>
        <div className="ml-auto mr-[2px] flex gap-[3px]">
          <div className="flex h-[15px] w-[29px] items-end justify-center border border-[#b0b2b6] bg-[#d8dade] pb-[3px]">
            <div className="h-[2px] w-[7px] bg-[#777]" />
          </div>
          <div className="flex h-[15px] w-[28px] items-center justify-center border border-[#b0b2b6] bg-[#d8dade]">
            <div className="relative h-[7px] w-[7px] border border-[#666] bg-[#d8dade] shadow-[2px_-2px_0_-1px_#666]" />
          </div>
          <div className="flex h-[15px] w-[27px] items-center justify-center border border-[#b0b2b6] bg-[#d8dade] text-[11px] font-bold text-[#777]">X</div>
        </div>
      </div>

      <div className="flex h-[22px] shrink-0 items-center pl-[9px] text-[11px] text-[#444]">
        {menus.map(([t, w]) => (
          <div key={t} className={`flex shrink-0 items-center gap-[4px] ${w}`}>
            {t}
            <div className="h-0 w-0 border-x-[2.5px] border-t-[3px] border-x-transparent border-t-[#555]" />
          </div>
        ))}
      </div>

      <div className="flex h-[31px] shrink-0 gap-[4px] pb-[3px] pl-[2px]">
        <div className={`${panel} w-[321px]`}>
          <Grip />
          <div className="w-[5px]" />
          {top1.map((n, i) => (
            <div key={i} className="flex w-[26px] shrink-0 justify-center">
              {n}
            </div>
          ))}
          <DropEnd />
        </div>
        <div className={`${panel} w-[432px]`}>
          <Grip />
          <div className="w-[5px]" />
          {top2.map((n, i) => (
            <div key={i} className="flex w-[26px] shrink-0 justify-center">
              {n}
            </div>
          ))}
        </div>
        <div className={`${panel} ml-[1px] w-[802px] text-[11.5px] text-[#444]`}>
          <Grip />
          <div className="w-[4px]" />
          <div className="flex w-[26px] shrink-0 justify-center">
            <Svg>
              <path d="M3 3H14L16 6H5ZM3 7H14L16 10H5ZM3 11H11V16H3Z" />
            </Svg>
          </div>
          <div className="ml-[4px] flex h-[20px] w-[199px] shrink-0 items-center border border-[#bdbfc3] bg-white pl-[3px]">
            0
            <div className="ml-auto mr-[5px] h-0 w-0 border-x-[3px] border-t-[4px] border-x-transparent border-t-[#333]" />
          </div>
          <div className="ml-[2px] flex">
            {layerIcons.map((n, i) => (
              <div key={i} className="flex w-[27px] justify-center">
                {n}
              </div>
            ))}
          </div>
          <Sep cls="ml-[2px]" />
          <span className="ml-[13px] w-[50px] shrink-0 whitespace-nowrap">Tipo linea</span>
          <Sep cls="ml-[9px]" />
          <span className="ml-[8px] w-[62px] shrink-0 whitespace-nowrap">Continuous</span>
          <Sep cls="ml-[9px]" />
          <span className="ml-[9px] w-[74px] shrink-0 whitespace-nowrap">Spessore linea</span>
          <Sep cls="ml-[9px]" />
          <span className="ml-[7px] w-[136px] shrink-0 whitespace-nowrap">LW_DOCUMENTDEFAULT</span>
          <Sep cls="ml-[9px]" />
          <div className="ml-[4px] h-[21px] w-[40px] shrink-0 border border-[#aaa] bg-white" />
          <div className="ml-[5px] h-[16px] w-[16px] shrink-0 rounded-full border border-[#888] bg-[conic-gradient(#e84a30,#f0d040,#50c040,#3080d0,#7040b0,#e84a30)]" />
        </div>
      </div>

      <div className="flex h-[32px] shrink-0 gap-[3px] pb-[4px] pl-[2px] text-[12px] text-[#333]">
        <div className={`${panel} w-[626px]`}>
          <Grip />
          <div className="w-[13px]" />
          <span className="w-[46px] shrink-0 whitespace-nowrap">Poligoni</span>
          <Sep cls="ml-[4px]" />
          <div className="ml-[5px] flex h-[22px]">
            {vani.map(([t, c]) => (
              <div key={t} className={`flex h-[22px] shrink-0 items-center justify-center whitespace-nowrap ${c}`}>
                {t}
              </div>
            ))}
          </div>
          <span className="ml-[5px] w-[90px] shrink-0 whitespace-nowrap">Chiudi Poligono</span>
          <DropEnd />
        </div>
        <div className={`${panel} w-[463px]`}>
          <Grip />
          <div className="w-[13px]" />
          <span className="w-[44px] shrink-0">Cartigli</span>
          <Sep />
          <div className="ml-[10px] flex text-[11.5px]">
            {cartigli.map(([t, w]) => (
              <span key={t} className={`shrink-0 whitespace-nowrap ${w}`}>
                {t}
              </span>
            ))}
          </div>
          <div className="ml-[1px] flex flex-col items-center text-[8px] leading-[8px] text-[#666]">
            N
            <div className="h-[8px] w-[6px] rounded-full border border-[#bbb]" />
          </div>
        </div>
        <div className={`${panel} w-[225px]`}>
          <Grip />
          <div className="w-[5px]" />
          {dims.map((n, i) => (
            <div key={i} className="flex w-[26px] shrink-0 justify-center">
              {n}
            </div>
          ))}
        </div>
      </div>

      <div className="flex h-[906px] shrink-0">
        <LeftBar />
        <div className="w-[20px] shrink-0 pt-[8px]">
          <div className="flex h-[43px] w-[20px] items-center justify-center border border-l-0 border-[#b9bbbf] bg-[#eff0f3] text-[#333] [writing-mode:vertical-rl]">Blocchi</div>
        </div>
        <div className="relative flex w-[1276px] shrink-0 flex-col">
          <div className="flex h-[23px] shrink-0 items-end border-b border-[#a9abb0] pl-[6px]">
            <div className="flex h-[20px] w-[66px] items-center border border-b-0 border-[#b5b7bb] bg-[#e3e5e9] pl-[9px] text-[#555]">1.dwg</div>
            <div className="flex h-[23px] w-[252px] items-center border border-b-0 border-[#a9abb0] bg-[#f4f5f7] pl-[9px] text-[#666]">
              C:\Users\Supporto\Desktop\Planimetria.dwg
              <X size={11} strokeWidth={3.5} color="#777" className="ml-[13px]" />
            </div>
            <div className="mb-[9px] ml-auto mr-[14px] h-0 w-0 border-x-[3px] border-t-[4px] border-x-transparent border-t-[#777]" />
          </div>
          <div className="ml-[3px] flex h-[777px] shrink-0">
            <div className="h-[777px] w-[1251px] shrink-0 bg-black">
              <Drawing />
            </div>
            <div className="flex w-[17px] shrink-0 flex-col items-center bg-[#f0f0f0] pt-[3px]">
              <ChevronUp size={12} strokeWidth={2.5} color="#555" />
              <div className="mt-[162px] h-[565px] w-full bg-[#cdcdcd]" />
              <ChevronDown size={12} strokeWidth={2.5} color="#555" className="mb-[3px] mt-auto" />
            </div>
          </div>
          <div className="ml-[3px] flex h-[20px] shrink-0 bg-[#f0f0f0]">
            <div className="ml-[3px] flex h-[20px] w-[39px] items-center justify-center border border-[#a9abb0] bg-white">Model</div>
            <div className="ml-[5px] flex h-[20px] w-[62px] items-center justify-center border-x border-[#bbb]">Layout1</div>
            <div className="flex h-[20px] w-[61px] items-center justify-center border-r border-[#bbb]">Layout2</div>
            <div className="ml-auto flex items-center">
              <ChevronLeft size={12} strokeWidth={2.5} color="#555" />
              <div className="ml-[3px] h-[20px] w-[432px] bg-[#cdcdcd]" />
              <div className="flex w-[17px] justify-center">
                <ChevronRight size={12} strokeWidth={2.5} color="#555" />
              </div>
            </div>
          </div>
          <div className="mt-[3px] flex h-[60px] w-[1271px] shrink-0 border-y border-[#a9abb0] bg-white">
            <div className="flex-1 pl-[5px] pt-[2px] text-[10.5px] leading-[13px] text-[#222]">
              <div>Comando: ZoomE</div>
              <div>Comando: ZoomE</div>
              <div>Comando: SalvaCome</div>
              <div>Comando: Print</div>
            </div>
            <div className="flex w-[15px] flex-col items-center bg-[#f0f0f0]">
              <ChevronUp size={12} strokeWidth={2} color="#555" className="mt-[3px]" />
              <div className="mt-[7px] h-[17px] w-full bg-[#cdcdcd]" />
              <ChevronDown size={12} strokeWidth={2} color="#555" className="mt-[3px]" />
            </div>
          </div>
          <div className="mt-[2px] flex h-[20px] shrink-0 items-center pl-[8px] text-[#444]">
            <span className="w-[58px]">Comando:</span>
            <div className="h-[20px] w-[1208px] border border-[#b5b7bb] bg-white" />
          </div>
          <Dialog />
          <Editor />
        </div>
        <Properties />
        <RightBar />
      </div>

      <div className="flex h-[27px] shrink-0 items-center bg-gradient-to-b from-[#dde0e4] to-[#c6c9cf] text-[#333]">
        <span className="ml-[10px] w-[127px] whitespace-nowrap">0.0000 , 0.0000 , 0.0000</span>
        <div className="h-[22px] w-[3px] border-x border-[#b5b7bb]" />
        <span className="ml-[4px] w-[67px] whitespace-nowrap">ORTHO OFF</span>
        <div className="h-[22px] w-[2px] border-l border-[#b5b7bb]" />
        <span className="ml-[4px] w-[71px] whitespace-nowrap">POLARE OFF</span>
        <div className="h-[22px] w-[2px] border-l border-[#b5b7bb]" />
        <span className="ml-[4px] w-[75px] whitespace-nowrap">ANCORA OFF</span>
        <div className="h-[22px] w-[2px] border-l border-[#b5b7bb]" />
        <span className="ml-[4px] w-[53px] whitespace-nowrap">GRID OFF</span>
        {snaps.map((n, i) => (
          <div key={i} className="flex w-[26px] shrink-0 justify-center">
            {n}
          </div>
        ))}
        <div className="ml-[2px] h-[22px] w-px bg-[#a9abb0]" />
        <div className="ml-[6px] text-[18px] leading-none text-[#333]">+</div>
        <div className="ml-auto h-[22px] w-px bg-[#b5b7bb]" />
        <div className="ml-[7px] mr-[7px] h-[14px] w-[49px] border border-[#c5c7cb] bg-[#eceef1]" />
      </div>
    </div>
  );
}
